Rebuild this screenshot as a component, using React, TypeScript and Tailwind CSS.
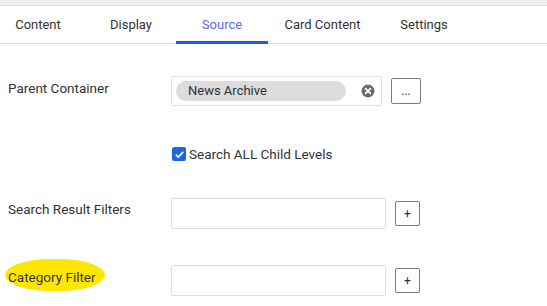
import React from "react";

// tab widths picked so each label sits centred like the original strip
const TABS = [
  { label: "Content", w: "w-[96px]" },
  { label: "Display", w: "w-[90px]" },
  { label: "Source", w: "w-[92px]" },
  { label: "Card Content", w: "w-[109px]" },
  { label: "Settings", w: "w-[94px]" },
];
const ACTIVE = "Source";

function ClearIcon() {
  return (
    <svg width="14" height="14" viewBox="0 0 14 14">
      <circle cx="7" cy="7" r="6.5" fill="#6b6b6b" />
      <path d="M4.6 4.6 L9.4 9.4 M9.4 4.6 L4.6 9.4" stroke="#fff" strokeWidth="1.8" strokeLinecap="round" />
    </svg>
  );
}

function SmallButton({ label, wide }: { label: string; wide?: boolean }) {
  return (
    <button
      className={`${wide ? "w-[30px] h-[26px] mt-[2px]" : "w-[25px] h-[25px] mt-[3px]"} ml-[9px] flex items-center justify-center border border-[#7a7a7a] rounded-[2px] bg-white text-[12px] text-[#1d2b7a] leading-none`}
    >
      {label}
    </button>
  );
}

export default function App() {
  return (
    <div className="w-[547px] h-[306px] bg-white overflow-hidden text-[13.5px] text-[#333] font-['Roboto',sans-serif]">
      <div className="h-[5px] bg-[#efeff1]" />
      {/* tab strip */}
      <div className="flex border-t border-b border-[#dedede] h-[39px] text-[13px]">
        {TABS.map((t, i) => (
          <div
            key={t.label}
            className={`${t.w} ${i === 0 ? "-ml-[10px]" : ""} flex items-center justify-center pt-[3px] mb-[-1px] border-b-[3px] ${
              t.label === ACTIVE ? "border-[#1f5ae6] text-[#5b6cf0]" : "border-transparent"
            }`}
          >
            {t.label}
          </div>
        ))}
      </div>

      <div className="pl-[8px]">
        {/* Parent Container */}
        <div className="flex mt-[32px]">
          <div className="w-[163px] pt-[3px] leading-[18px]">Parent Container</div>
          <div className="w-[211px] h-[30px] border border-[#e0e0e0] rounded-[2px] flex items-center pl-[4px] pr-[6px]">
            <div className="w-[170px] h-[20px] rounded-full bg-[#dcdcdc] pl-[12px] flex items-center text-[13px] text-[#2e3340]">
              News Archive
            </div>
            <div className="ml-auto flex">
              <ClearIcon />
            </div>
          </div>
          <SmallButton label="..." wide />
        </div>

        {/* checkbox */}
        <div className="flex items-center mt-[40px] pl-[164px]">
          <span className="w-[14px] h-[14px] rounded-[2px] bg-[#1c66e6] flex items-center justify-center">
            <svg width="11" height="11" viewBox="0 0 11 11">
              <path d="M1.8 5.6 L4.3 8 L9.2 2.8" fill="none" stroke="#fff" strokeWidth="1.7" />
            </svg>
          </span>
          <span className="ml-[3px] leading-[16px]">Search ALL Child Levels</span>
        </div>

        {/* Search Result Filters */}
        <div className="flex mt-[36px]">
          <div className="w-[163px] pt-[2px] leading-[18px]">Search Result Filters</div>
          <div className="w-[215px] h-[31px] border border-[#dedede] rounded-[2px]" />
          <SmallButton label="+" />
        </div>

        {/* Category Filter, marked with a yellow highlighter */}
        <div className="flex mt-[36px]">
          <div className="w-[163px] flex items-start leading-[18px]">
            <span className="block -ml-[3px] -mt-[6px] pl-[3px] pr-[9px] pt-[9px] pb-[5px] bg-[#ffe600] rounded-[45%/50%]">
              Category Filter
            </span>
          </div>
          <div className="w-[215px] h-[31px] border border-[#dedede] rounded-[2px]" />
          <SmallButton label="+" />
        </div>
      </div>
    </div>
  );
}
